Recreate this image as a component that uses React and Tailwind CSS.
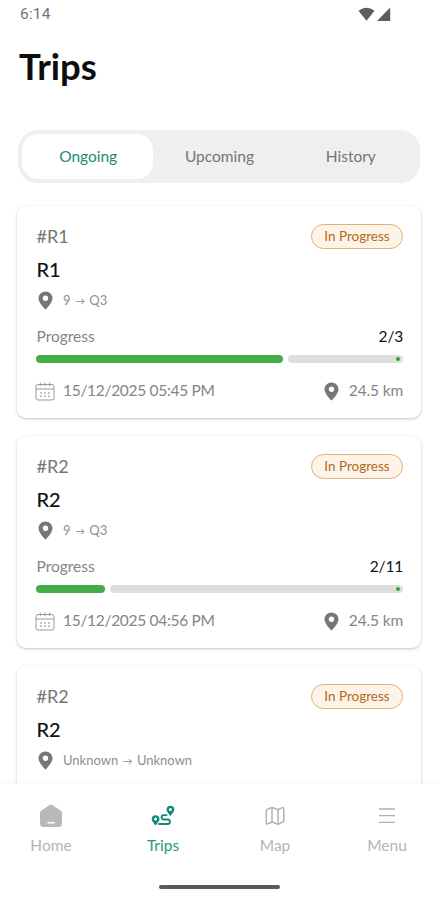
import { useState } from "react";

const TABS = ["Ongoing", "Upcoming", "History"];

const TRIPS = [
  { code: "#R1", name: "R1", from: "9", to: "Q3", done: 2, total: 3, date: "15/12/2025 05:45 PM", distance: "24.5 km" },
  { code: "#R2", name: "R2", from: "9", to: "Q3", done: 2, total: 11, date: "15/12/2025 04:56 PM", distance: "24.5 km" },
  { code: "#R2", name: "R2", from: "Unknown", to: "Unknown" },
];

function PinIcon() {
  return (
    <svg width="15" height="19" viewBox="0 0 15 19" className="shrink-0">
      <path
        fill="#777777"
        fillRule="evenodd"
        d="M7.5 0.5C3.6 0.5 0.5 3.5 0.5 7.3C0.5 12 7.5 18.6 7.5 18.6S14.5 12 14.5 7.3C14.5 3.5 11.4 0.5 7.5 0.5ZM7.5 4.6A2.7 2.7 0 1 1 7.5 10A2.7 2.7 0 0 1 7.5 4.6Z"
      />
    </svg>
  );
}

function CalendarIcon() {
  return (
    <svg width="20" height="19" viewBox="0 0 20 19" fill="none" stroke="#999999" className="shrink-0">
      <rect x="1" y="2.5" width="18" height="15.5" rx="2" />
      <path d="M1 7H19M5.3 0.5V4.2M10 0.5V4.2M14.7 0.5V4.2" />
      <path d="M5.3 11H15M5.3 14.3H15" strokeWidth="1.4" strokeDasharray="1.5 2.4" />
    </svg>
  );
}

function HomeIcon() {
  return (
    <svg width="24" height="24" viewBox="0 0 24 24">
      <path
        fill="#b9b9b9"
        d="M10.6 0.9a2.4 2.4 0 0 1 2.8 0l8.2 5.6a3 3 0 0 1 1.4 2.5V19.5a3.5 3.5 0 0 1-3.5 3.5h-15A3.5 3.5 0 0 1 1 19.5V9a3 3 0 0 1 1.4-2.5Z"
      />
      <path d="M9 18.8H15" stroke="#fff" strokeWidth="1.6" strokeLinecap="round" />
    </svg>
  );
}

function RouteIcon() {
  return (
    <svg width="24" height="22" viewBox="0 0 24 22">
      <path
        fill="#0f8a75"
        fillRule="evenodd"
        d="M4.6 10.3A3.9 3.9 0 0 0 0.7 14.1C0.7 16.5 4.6 20.4 4.6 20.4S8.5 16.5 8.5 14.1A3.9 3.9 0 0 0 4.6 10.3ZM4.6 12.6A1.5 1.5 0 1 1 4.6 15.6A1.5 1.5 0 0 1 4.6 12.6ZM19.4 0.8A3.9 3.9 0 0 0 15.5 4.6C15.5 7 19.4 10.9 19.4 10.9S23.3 7 23.3 4.6A3.9 3.9 0 0 0 19.4 0.8ZM19.4 3.1A1.5 1.5 0 1 1 19.4 6.1A1.5 1.5 0 0 1 19.4 3.1Z"
      />
      <path
        d="M15.6 10.1H12.8A2.2 2.2 0 0 0 12.8 14.5H16.6A2.2 2.2 0 0 1 16.6 19H8"
        fill="none"
        stroke="#0f8a75"
        strokeWidth="1.9"
        strokeLinecap="round"
      />
    </svg>
  );
}

function MapIcon() {
  return (
    <svg width="20" height="20" viewBox="0 0 20 20" fill="none" stroke="#adadad" strokeWidth="1.4" strokeLinejoin="round">
      <path d="M1.2 5.2Q1.2 3.9 2.3 3.4L7 1.5L13 3.6L17.2 1.7Q18.8 1.2 18.8 2.9V14.4Q18.8 15.6 17.7 16.1L13 18.3L7 16L2.8 17.9Q1.2 18.5 1.2 16.8Z" />
      <path d="M7 1.5V16M13 3.6V18.3" />
    </svg>
  );
}

function MenuIcon() {
  return (
    <svg width="18" height="18" viewBox="0 0 18 18" stroke="#b0b0b0" strokeWidth="1.3">
      <path d="M1 2H17M1 8.7H17M1 15.4H17" />
    </svg>
  );
}

function StatusBar() {
  return (
    <div className="flex h-7 items-center justify-between pl-5 pr-[47px]">
      <span className="pt-px font-['Roboto',sans-serif] text-[15.5px] tracking-[0.2px] text-[#757575]">6:14</span>
      <svg width="33" height="15" viewBox="0 0 33 15" fill="#5c5c5c">
        <path d="M0.5 3.7Q8.5 -2.3 16.5 3.7L8.5 13.8Z" />
        <path d="M32.2 0.5V14H19Z" />
      </svg>
    </div>
  );
}

function ProgressBar({ done, total }) {
  return (
    <div className="-ml-[0.5px] mt-2 flex h-2 gap-[5px]">
      <div className="rounded-full bg-[#43ad48]" style={{ width: `${(done / total) * 100 + 0.6}%` }} />
      <div className="flex flex-1 items-center justify-end rounded-full bg-[#dedede] pr-[3px]">
        <div className="size-1 rounded-full bg-[#2fa336]" />
      </div>
    </div>
  );
}

function TripCard({ trip }) {
  return (
    <article className="h-[212px] shrink-0 rounded-[9px] bg-white pt-[18px] pr-[18px] pl-[19.5px] shadow-[0_1px_3px_rgba(0,0,0,0.24)]">
      <div className="flex h-[25px] items-center justify-between">
        <span className="text-[18px] text-[#757575]">{trip.code}</span>
        <span className="flex h-[25px] w-[92px] items-center justify-center rounded-full border border-[#e0b27c] bg-[#fdf3e7] text-[13.5px] text-[#b36a1c]">
          In Progress
        </span>
      </div>
      <h2 className="mt-[7px] text-[20px] leading-[26px] font-medium text-[#111]">{trip.name}</h2>
      <div className="mt-2 flex h-5 items-center gap-[10px] pl-[1.5px] text-[13px] text-[#8f8f8f]">
        <PinIcon />
        <span className="pt-px">
          {trip.from} <span className="mx-px text-[10px]">→</span> {trip.to}
        </span>
      </div>
      {trip.total && (
        <>
          <div className="mt-[17px] flex h-5 items-center justify-between text-[15.5px]">
            <span className="text-[#858585]">Progress</span>
            <span className="tracking-[-0.2px] text-[#111]">{trip.done}/{trip.total}</span>
          </div>
          <ProgressBar done={trip.done} total={trip.total} />
          <div className="mt-[18px] flex h-5 items-center justify-between text-[15.5px] text-[#858585]">
            <div className="-ml-[1.5px] flex items-center gap-2">
              <CalendarIcon />
              <span className="tracking-[-0.3px]">{trip.date}</span>
            </div>
            <div className="flex items-center gap-[10px]">
              <PinIcon />
              <span className="tracking-[-0.15px]">{trip.distance}</span>
            </div>
          </div>
        </>
      )}
    </article>
  );
}

const NAV = [
  { label: "Home", Icon: HomeIcon },
  { label: "Trips", Icon: RouteIcon },
  { label: "Map", Icon: MapIcon },
  { label: "Menu", Icon: MenuIcon },
];

export default function App() {
  const [tab, setTab] = useState("Ongoing");

  return (
    <div className="flex h-[900px] w-full flex-col overflow-hidden bg-white font-['Lato',sans-serif]">
      <StatusBar />
      <h1 className="mt-[13px] h-[50px] pl-[19px] text-[36.5px] leading-[50px] font-bold text-[#0d0d0d]">Trips</h1>

      <div className="mr-[18px] ml-[18px] mt-[39px] flex h-[53px] shrink-0 rounded-[20px] bg-[#efefef] p-1">
        {TABS.map((t) => (
          <button
            key={t}
            onClick={() => setTab(t)}
            className={`flex-1 rounded-2xl pt-px pl-px text-[15.5px] ${t === tab ? "bg-white text-[#1a8c78]" : "text-[#757575]"}`}
          >
            {t}
          </button>
        ))}
      </div>

      <main className="flex min-h-0 flex-1 flex-col gap-[18px] overflow-hidden px-[17px] pt-[23px]">
        {TRIPS.map((trip, i) => (
          <TripCard key={i} trip={trip} />
        ))}
      </main>

      <nav className="z-10 flex h-[116px] shrink-0 flex-col bg-white shadow-[0_-2px_4px_rgba(0,0,0,0.03)]">
        <div className="flex justify-between px-[6px] pt-5">
          {NAV.map(({ label, Icon }) => (
            <button key={label} className="flex w-[90px] flex-col items-center">
              <span className="flex h-6 items-center">
                <Icon />
              </span>
              <span className={`mt-[7px] text-[15.5px] leading-5 ${label === "Trips" ? "text-[#2c9582]" : "text-[#b5b5b5]"}`}>
                {label}
              </span>
            </button>
          ))}
        </div>
        <div className="mx-auto mt-[30px] h-1 w-[121px] rounded-full bg-[#5a5a5a]" />
      </nav>
    </div>
  );
}
